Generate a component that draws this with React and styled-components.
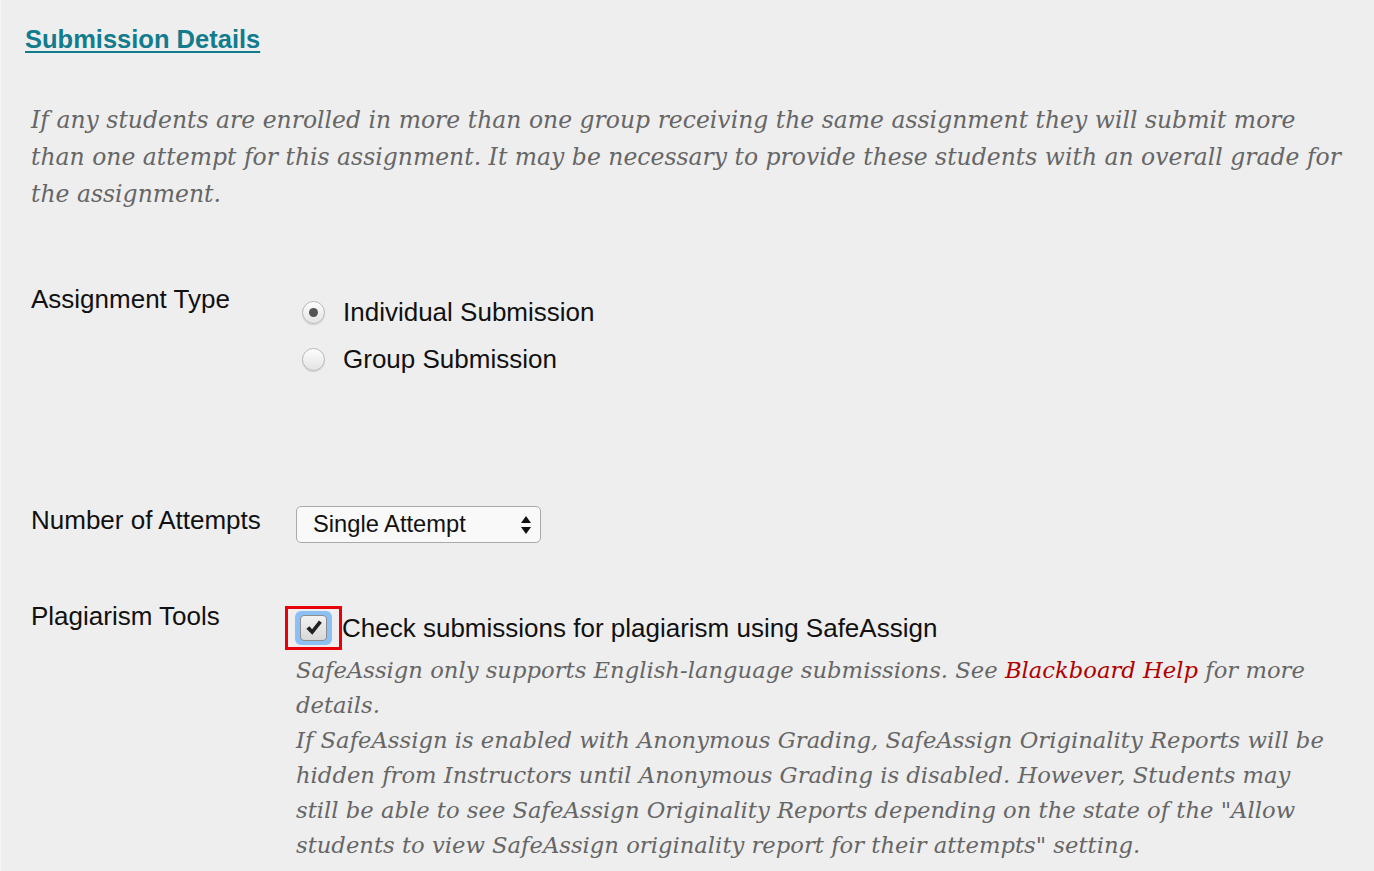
import React from "react";
import styled, { createGlobalStyle } from "styled-components";

const Global = createGlobalStyle`
  html, body { margin: 0; padding: 0; background: #eeeeee; }
  body { font-family: "Liberation Sans", Arial, sans-serif; color: #111; }
`;

const Page = styled.div`
  min-height: 871px;
  box-sizing: border-box;
  border-left: 1px solid #f6f6f6;
  padding: 25px 0 0 24px;
`;

const Heading = styled.a`
  display: inline-block;
  font-family: "Liberation Sans", Arial, sans-serif;
  font-weight: bold;
  font-size: 25.5px;
  color: #127c8e;
  text-decoration: underline;
  text-underline-offset: 3px;
  text-decoration-thickness: 2px;
`;

const Intro = styled.p`
  margin: 48px 0 0 6px;
  width: 1316px;
  font-family: "DejaVu Serif", Georgia, serif;
  font-style: italic;
  font-size: 23.5px;
  line-height: 37px;
  color: #666;
`;

const Row = styled.div`
  display: grid;
  grid-template-columns: 265px 1fr;
  margin-left: 6px;
  margin-top: ${(p) => p.$top}px;
`;

const Label = styled.div`
  font-size: 26px;
  line-height: 30px;
  color: #111;
`;

const Options = styled.div`
  display: flex;
  flex-direction: column;
  gap: 17px;
  padding-top: 13px;
`;

const Option = styled.label`
  display: flex;
  align-items: center;
  gap: 18px;
  font-size: 26px;
  line-height: 30px;
  padding-left: 6px;
`;

const Radio = styled.span`
  width: 23px;
  height: 23px;
  box-sizing: border-box;
  border-radius: 50%;
  border: 1px solid #b8b8b8;
  background: linear-gradient(#fdfdfd, #e4e4e4);
  box-shadow: 0 1px 1px rgba(0,0,0,0.12);
  display: flex;
  align-items: center;
  justify-content: center;
  &::after {
    content: "";
    width: 9px;
    height: 9px;
    border-radius: 50%;
    background: ${(p) => (p.$checked ? "#555" : "transparent")};
  }
`;

const Select = styled.div`
  width: 245px;
  height: 37px;
  margin-top: 1px;
  box-sizing: border-box;
  border: 1px solid #a9a9a9;
  border-radius: 5px;
  background: #f9f9f9;
  display: flex;
  align-items: center;
  justify-content: space-between;
  padding: 0 8px 0 16px;
  font-size: 23.7px;
  color: #111;
`;

const Arrows = styled.svg`
  width: 12px;
  height: 22px;
`;

const CheckColumn = styled.div`
  padding-top: 5px;
`;

const CheckLine = styled.div`
  display: flex;
  align-items: center;
  font-size: 26px;
  line-height: 30px;
`;

const Highlight = styled.span`
  width: 57px;
  height: 44px;
  box-sizing: border-box;
  border: 3px solid #e8000b;
  display: flex;
  align-items: center;
  justify-content: center;
  margin-left: -11px;
`;

const Focus = styled.span`
  width: 37px;
  height: 34px;
  border-radius: 6px;
  background: #8cc0f5;
  display: flex;
  align-items: center;
  justify-content: center;
`;

const Box = styled.span`
  width: 27px;
  height: 26px;
  box-sizing: border-box;
  border: 1px solid #8d8d8d;
  border-radius: 4px;
  background: linear-gradient(#f2f2f2, #d8d8d8);
  display: flex;
  align-items: center;
  justify-content: center;
`;

const Note = styled.div`
  margin-top: 3px;
  font-family: "DejaVu Serif", Georgia, serif;
  font-style: italic;
  font-size: 22.7px;
  line-height: 35px;
  color: #666;
  width: 1040px;
`;

const HelpLink = styled.a`
  color: #b00000;
  text-decoration: none;
`;

export default function App() {
  return (
    <>
      <Global />
      <Page>
        <Heading href="#">Submission Details</Heading>
        <Intro>
          If any students are enrolled in more than one group receiving the same assignment they will submit more
          than one attempt for this assignment. It may be necessary to provide these students with an overall grade for
          the assignment.
        </Intro>
        <Row $top={71}>
          <Label>Assignment Type</Label>
          <Options>
            <Option>
              <Radio $checked />
              Individual Submission
            </Option>
            <Option>
              <Radio />
              Group Submission
            </Option>
          </Options>
        </Row>
        <Row $top={131}>
          <Label>Number of Attempts</Label>
          <Select>
            <span>Single Attempt</span>
            <Arrows viewBox="0 0 12 22">
              <path d="M6 2 L11 9 H1 Z" fill="#111" />
              <path d="M6 20 L11 13 H1 Z" fill="#111" />
            </Arrows>
          </Select>
        </Row>
        <Row $top={58}>
          <Label>Plagiarism Tools</Label>
          <CheckColumn>
            <CheckLine>
              <Highlight>
                <Focus>
                  <Box>
                    <svg width="18" height="18" viewBox="0 0 16 16">
                      <path d="M1.2 8.6 L3.9 6.4 L6.3 9.2 L12.4 1.4 L15 3.4 L6.5 14 Z" fill="#222" />
                    </svg>
                  </Box>
                </Focus>
              </Highlight>
              Check submissions for plagiarism using SafeAssign
            </CheckLine>
            <Note>
              SafeAssign only supports English-language submissions. See <HelpLink href="#">Blackboard Help</HelpLink> for more
              details.
              <br />
              If SafeAssign is enabled with Anonymous Grading, SafeAssign Originality Reports will be
              hidden from Instructors until Anonymous Grading is disabled. However, Students may
              still be able to see SafeAssign Originality Reports depending on the state of the "Allow
              students to view SafeAssign originality report for their attempts" setting.
            </Note>
          </CheckColumn>
        </Row>
      </Page>
    </>
  );
}
